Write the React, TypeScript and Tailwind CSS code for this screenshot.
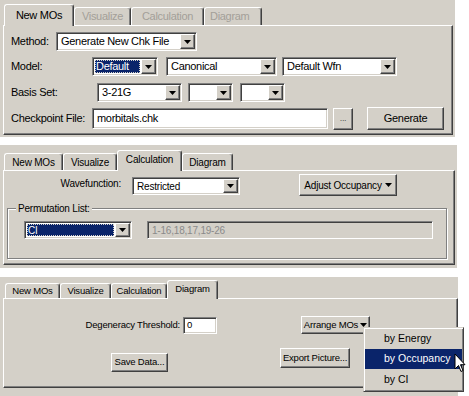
import type { ReactNode } from 'react'

const sunken =
  'border border-t-[#808080] border-l-[#808080] border-b-white border-r-white shadow-[inset_1px_1px_0_#404040,inset_-1px_-1px_0_#d4d0c8]'
const raised =
  'border border-t-white border-l-white border-b-[#404040] border-r-[#404040] shadow-[inset_-1px_-1px_0_#808080]'

function Arrow({ className = '' }: { className?: string }) {
  return (
    <svg width="7" height="4" viewBox="0 0 7 4" className={className}>
      <path d="M0 0h7L3.5 4z" fill="#000" />
    </svg>
  )
}

function Combo({
  text,
  selected,
  className,
}: {
  text: string
  selected?: boolean
  className: string
}) {
  return (
    <div className={`flex bg-white p-[1px] ${sunken} ${className}`}>
      <div className="flex min-w-0 flex-1 items-center overflow-hidden">
        {selected ? (
          <span className="m-[1px] flex h-[calc(100%-2px)] flex-1 items-center bg-[#0a246a] pl-[1px] text-white outline outline-1 outline-dotted outline-[#d4d0c8] -outline-offset-1">
            {text}
          </span>
        ) : (
          <span className="pl-[3px] whitespace-nowrap">{text}</span>
        )}
      </div>
      <div className={`flex w-[15px] items-center justify-center bg-[#d4d0c8] ${raised}`}>
        <Arrow />
      </div>
    </div>
  )
}

function Button({ children, className }: { children: ReactNode; className: string }) {
  return (
    <div className={`flex items-center justify-center bg-[#d4d0c8] whitespace-nowrap ${raised} ${className}`}>
      {children}
    </div>
  )
}

function Tab({
  label,
  active,
  dim,
  className,
}: {
  label: string
  active?: boolean
  dim?: boolean
  className: string
}) {
  return (
    <div
      className={`flex items-center justify-center rounded-t-[3px] border-t border-l border-r border-t-white border-l-white border-r-[#404040] bg-[#d4d0c8] shadow-[inset_-1px_0_0_#808080] whitespace-nowrap ${
        active ? 'relative z-10 -mb-px' : ''
      } ${dim ? 'text-[#a39f98]' : ''} ${className}`}
    >
      {label}
    </div>
  )
}

const body =
  'border border-t-white border-l-white border-r-[#404040] border-b-[#404040] shadow-[inset_-1px_-1px_0_#808080]'

function NewMOsPanel() {
  return (
    <div className="h-[137px] w-[455px] bg-[#d4d0c8] pt-[4px] text-[11px] tracking-[-0.3px]">
      <div className="flex items-end pl-[4px]">
        <Tab label="New MOs" active className="h-[22px] w-[70px] pb-[1px]" />
        <Tab label="Visualize" dim className="h-[18px] w-[57px]" />
        <Tab label="Calculation" dim className="h-[18px] w-[73px]" />
        <Tab label="Diagram" dim className="h-[18px] w-[58px] justify-start pl-[5px]" />
      </div>
      <div className={`ml-[3px] h-[110px] w-[450px] ${body}`}>
        <div className="flex flex-col pl-[7px] pt-[6px]">
          <div className="flex h-[19px] items-center">
            <span className="w-[45px]">Method:</span>
            <Combo text="Generate New Chk File" className="h-[19px] w-[141px]" />
          </div>
          <div className="mt-[6px] flex h-[19px] items-center">
            <span className="w-[81px]">Model:</span>
            <Combo text="Default" selected className="h-[19px] w-[66px]" />
            <Combo text="Canonical" className="ml-[8px] h-[19px] w-[111px]" />
            <Combo text="Default Wfn" className="ml-[5px] h-[19px] w-[115px]" />
          </div>
          <div className="mt-[7px] flex h-[19px] items-center">
            <span className="w-[86px]">Basis Set:</span>
            <Combo text="3-21G" className="h-[19px] w-[85px]" />
            <Combo text="" className="ml-[6px] h-[19px] w-[45px]" />
            <Combo text="" className="ml-[7px] h-[19px] w-[45px]" />
          </div>
          <div className="mt-[5px] flex h-[23px] items-center">
            <span className="w-[81px]">Checkpoint File:</span>
            <div className={`flex h-[21px] w-[236px] items-center bg-white pl-[4px] ${sunken}`}>
              morbitals.chk
            </div>
            <Button className="ml-[5px] h-[22px] w-[20px] items-end pb-[3px] text-[9px] text-[#555]">...</Button>
            <Button className="ml-[14px] h-[23px] w-[77px]">Generate</Button>
          </div>
        </div>
      </div>
    </div>
  )
}

function CalculationPanel() {
  return (
    <div className="mt-[8px] h-[123px] w-[457px] bg-[#d4d0c8] pt-[5px] text-[10px] tracking-[-0.2px]">
      <div className="flex items-end pl-[4px]">
        <Tab label="New MOs" className="h-[17px] w-[59px]" />
        <Tab label="Visualize" className="h-[17px] w-[54px]" />
        <Tab label="Calculation" active className="h-[21px] w-[65px] pb-[3px]" />
        <Tab label="Diagram" className="h-[17px] w-[51px]" />
      </div>
      <div className={`ml-[3px] h-[95px] w-[452px] ${body}`}>
        <div className="flex h-[25px] items-end">
          <span className="w-[117px] pb-[5px] text-right">Wavefunction:</span>
          <Combo text="Restricted" className="mb-[1px] ml-[11px] h-[18px] w-[108px]" />
          <Button className="ml-[59px] h-[22px] w-[98px] gap-[3px]">
            Adjust Occupancy <Arrow />
          </Button>
        </div>
        <fieldset className="ml-[3px] mt-[7px] h-[56px] w-[440px] border border-[#808080] shadow-[inset_1px_1px_0_#fff,1px_1px_0_#fff]">
          <legend className="ml-[8px] bg-[#d4d0c8] px-[2px] leading-[11px]">Permutation List:</legend>
          <div className="mt-[7px] flex items-center pl-[16px]">
            <Combo text="CI" selected className="h-[18px] w-[108px]" />
            <div className={`ml-[15px] flex h-[18px] w-[286px] items-center bg-[#d4d0c8] pl-[4px] text-[#8a8a8a] ${sunken}`}>
              1-16,18,17,19-26
            </div>
          </div>
        </fieldset>
      </div>
    </div>
  )
}

function DiagramPanel() {
  return (
    <div className="relative mt-[9px] h-[119px] w-[458px] bg-[#d4d0c8] pt-[3px] text-[9.5px] tracking-[-0.2px]">
      <div className="flex items-end pl-[5px]">
        <Tab label="New MOs" className="h-[15px] w-[55px]" />
        <Tab label="Visualize" className="h-[15px] w-[51px]" />
        <Tab label="Calculation" className="h-[15px] w-[56px]" />
        <Tab label="Diagram" active className="h-[19px] w-[51px] pb-[2px]" />
      </div>
      <div className={`ml-[3px] h-[90px] w-[455px] ${body}`}>
        <div className="mt-[17px] flex h-[18px] items-center">
          <span className="w-[176px] text-right">Degeneracy Threshold:</span>
          <div className={`ml-[3px] flex h-[17px] w-[34px] items-center bg-white pl-[3px] ${sunken}`}>0</div>
          <Button className="ml-[84px] h-[18px] w-[69px] gap-[2px]">
            Arrange MOs <Arrow />
          </Button>
        </div>
        <div className="mt-[14px] flex items-start">
          <Button className="ml-[107px] mt-[5px] h-[19px] w-[57px]">Save Data...</Button>
          <Button className="ml-[112px] h-[20px] w-[70px]">Export Picture...</Button>
        </div>
      </div>

      <div className="absolute left-[363px] top-[50px] z-20 w-[101px] border border-t-[#d4d0c8] border-l-[#d4d0c8] border-b-[#404040] border-r-[#404040] bg-[#d4d0c8] p-[1px] text-[10.5px] tracking-normal shadow-[inset_1px_1px_0_#fff,inset_-1px_-1px_0_#808080]">
        <div className="flex h-[20px] items-center pl-[19px]">by Energy</div>
        <div className="flex h-[20px] items-center bg-[#0a246a] pl-[19px] text-white">by Occupancy</div>
        <div className="flex h-[21px] items-center pl-[19px]">by CI</div>
      </div>
      <svg
        width="13"
        height="20"
        viewBox="0 0 13 20"
        className="absolute left-[454px] top-[76px] z-30"
      >
        <path
          d="M1 1v15l3.5-3.5 2.5 6 2-1-2.5-5.8H11z"
          fill="#fff"
          stroke="#000"
          strokeWidth="1"
          strokeLinejoin="miter"
        />
      </svg>
    </div>
  )
}

export default function App() {
  return (
    <div className="h-[396px] w-[469px] overflow-hidden bg-white font-['Liberation_Sans',Arial,sans-serif] text-black">
      <NewMOsPanel />
      <CalculationPanel />
      <DiagramPanel />
    </div>
  )
}
